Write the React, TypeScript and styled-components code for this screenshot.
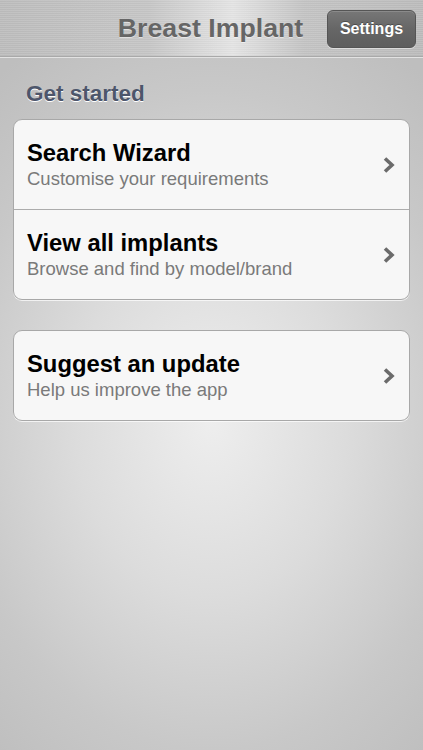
import React from 'react';
import styled, { createGlobalStyle } from 'styled-components';

const GlobalStyle = createGlobalStyle`
    html, body {
        margin: 0;
        padding: 0;
        height: 100%;
    }
    body {
        font-family: "Liberation Sans", Arial, sans-serif;
        background: #c4c4c4;
    }
`;

const Screen = styled.div`
    width: 423px;
    height: 750px;
    display: flex;
    flex-direction: column;
    overflow: hidden;
    background: radial-gradient(ellipse 340px 440px at 211px 420px, #eeeeee 0%, #dcdcdc 40%, #c8c8c8 75%, #bebebe 100%);
`;

const NavBar = styled.div`
    height: 56px;
    flex-shrink: 0;
    position: relative;
    display: flex;
    align-items: center;
    justify-content: center;
    border-bottom: 1px solid #a9a9a9;
    box-shadow: 0 1px 0 #e2e2e2;
    background:
        repeating-linear-gradient(180deg, rgba(255,255,255,0.08) 0px, rgba(255,255,255,0.08) 1px, rgba(0,0,0,0.02) 1px, rgba(0,0,0,0.02) 2px),
        linear-gradient(90deg, #bdbdbd 0%, #c6c6c6 35%, #e4e4e4 55%, #c4c4c4 72%, #bcbcbc 100%);
`;

const Title = styled.h1`
    margin: 0 0 0 -2px;
    font-size: 26.7px;
    font-weight: bold;
    color: #666;
    text-shadow: 0 1px 0 rgba(255,255,255,0.5);
`;

const NavButton = styled.button`
    position: absolute;
    right: 7px;
    top: 10px;
    height: 38px;
    width: 89px;
    border: 1px solid #555;
    border-radius: 6px;
    background: linear-gradient(180deg, #777 0%, #666 50%, #5e5e5e 100%);
    box-shadow: inset 0 1px 0 rgba(255,255,255,0.15), 0 1px 0 rgba(255,255,255,0.4);
    color: #fff;
    font-family: "Liberation Sans", Arial, sans-serif;
    font-size: 16px;
    font-weight: bold;
    text-shadow: 0 -1px 0 rgba(0,0,0,0.3);
    padding: 0;
`;

const Content = styled.div`
    padding: 23px 13px 0 13px;
    display: flex;
    flex-direction: column;
`;

const SectionHeader = styled.h2`
    margin: 0 0 12px 13px;
    font-size: 22.5px;
    line-height: 27px;
    font-weight: bold;
    color: #4d566b;
    text-shadow: 0 1px 0 #fff;
`;

const Group = styled.div<{ $gap?: number }>`
    background: #f7f7f7;
    border: 1px solid #a8a8a8;
    border-radius: 9px;
    box-shadow: 0 1px 0 rgba(255,255,255,0.7);
    margin-bottom: ${p => p.$gap ?? 0}px;
    overflow: hidden;
`;

const Row = styled.div`
    height: 89px;
    display: flex;
    align-items: center;
    padding: 0 13px 0 13px;
    & + & {
        border-top: 1px solid #acacac;
    }
`;

const RowText = styled.div`
    flex: 1;
    display: flex;
    flex-direction: column;
    gap: 1px;
`;

const RowTitle = styled.div`
    font-size: 23.8px;
    line-height: 28px;
    font-weight: bold;
    color: #000;
`;

const RowSubtitle = styled.div`
    font-size: 18.5px;
    line-height: 22px;
    color: #7a7a7a;
`;

const Chevron = () => (
    <svg width="14" height="18" viewBox="0 0 14 18">
        <path d="M3 2.5 L10 9 L3 15.5" fill="none" stroke="#6b6b6b" strokeWidth="3.6" strokeLinecap="butt" strokeLinejoin="miter" />
    </svg>
);

interface IItem {
    title: string;
    subtitle: string;
}

const groups: IItem[][] = [
    [
        { title: 'Search Wizard', subtitle: 'Customise your requirements' },
        { title: 'View all implants', subtitle: 'Browse and find by model/brand' },
    ],
    [
        { title: 'Suggest an update', subtitle: 'Help us improve the app' },
    ],
];

const App: React.FC = () => {
    return (
        <>
            <GlobalStyle />
            <Screen>
                <NavBar>
                    <Title>Breast Implant</Title>
                    <NavButton>Settings</NavButton>
                </NavBar>
                <Content>
                    <SectionHeader>Get started</SectionHeader>
                    {groups.map((group, i) => (
                        <Group key={i} $gap={30}>
                            {group.map(item => (
                                <Row key={item.title}>
                                    <RowText>
                                        <RowTitle>{item.title}</RowTitle>
                                        <RowSubtitle>{item.subtitle}</RowSubtitle>
                                    </RowText>
                                    <Chevron />
                                </Row>
                            ))}
                        </Group>
                    ))}
                </Content>
            </Screen>
        </>
    );
};

export default App;
